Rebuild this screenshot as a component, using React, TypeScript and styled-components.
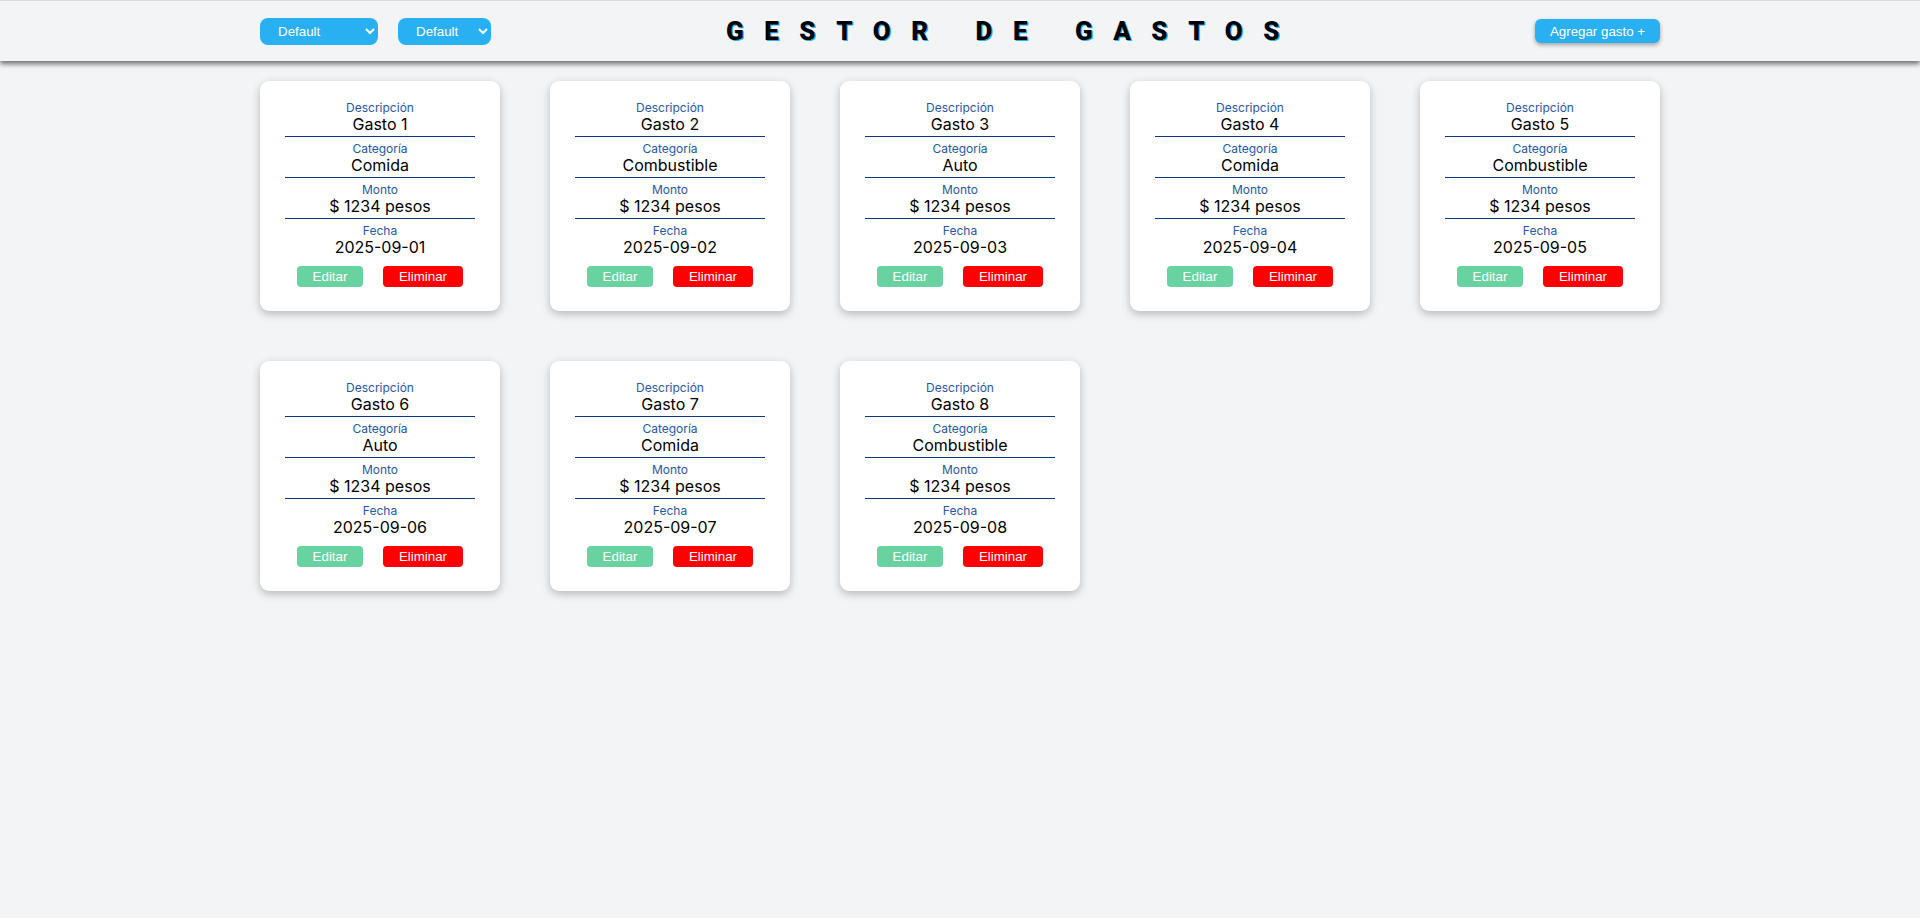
import React, { FC } from "react";
import styled, { createGlobalStyle } from "styled-components";

const GlobalStyle = createGlobalStyle`
  body {
    margin: 0;
    background: #f3f4f6;
    font-family: "Inter", "Liberation Sans", sans-serif;
  }
`;

const Header = styled.header`
  display: flex;
  justify-content: space-between;
  align-items: center;
  height: 60px;
  padding: 0 260px;
  background: #f3f4f6;
  border-top: 1px solid #dcdcdc;
  box-shadow: 0 3px 5px rgba(0, 0, 0, 0.55);
`;

const Filters = styled.div`
  display: flex;
  gap: 20px;
`;

const Select = styled.select<{ w: number }>`
  width: ${(p) => p.w}px;
  height: 27px;
  padding: 0 6px 0 14px;
  border: none;
  border-radius: 8px;
  background: #29b0f2;
  color: #fff;
  font: 13.33px "Liberation Sans", Arial, sans-serif;
  outline: none;
`;

const Title = styled.h1`
  margin: 0;
  font-family: Roboto, "Liberation Sans", sans-serif;
  font-weight: 900;
  font-size: 26px;
  letter-spacing: 20.5px;
  color: #000;
  text-shadow: 1px 1px 0 #29b0f2;
`;

const AddButton = styled.button`
  width: 125px;
  height: 24px;
  border: none;
  border-radius: 6px;
  background: #29b0f2;
  color: #fff;
  font: 13.33px "Liberation Sans", Arial, sans-serif;
  box-shadow: 0 2px 4px rgba(0, 0, 0, 0.35);
  cursor: pointer;
`;

const Grid = styled.main`
  display: grid;
  grid-template-columns: repeat(5, 240px);
  gap: 50px;
  padding: 20px 260px;
`;

const Card = styled.div`
  display: flex;
  flex-direction: column;
  height: 230px;
  box-sizing: border-box;
  padding: 20px 25px 0;
  background: #fff;
  border-radius: 9px;
  box-shadow: 0 3px 8px rgba(0, 0, 0, 0.25);
  text-align: center;
`;

const Field = styled.div<{ last?: boolean }>`
  padding-bottom: 2px;
  margin-bottom: ${(p) => (p.last ? 0 : 5)}px;
  border-bottom: ${(p) => (p.last ? "none" : "1px solid #0a3886")};
`;

const Label = styled.div`
  font-size: 12px;
  line-height: 13px;
  color: #2858a4;
`;

const Value = styled.div`
  font-size: 16px;
  line-height: 20px;
  color: #000;
`;

const Actions = styled.div`
  display: flex;
  justify-content: center;
  gap: 20px;
  margin-top: 7px;
`;

const ActionButton = styled.button<{ bg: string; w: number }>`
  width: ${(p) => p.w}px;
  height: 21px;
  padding: 0;
  border: none;
  border-radius: 4px;
  background: ${(p) => p.bg};
  color: #fff;
  font: 13.33px "Liberation Sans", Arial, sans-serif;
  cursor: pointer;
`;

interface Gasto {
  descripcion: string;
  categoria: string;
  monto: number;
  fecha: string;
}

const gastos: Gasto[] = [
  { descripcion: "Gasto 1", categoria: "Comida", monto: 1234, fecha: "2025-09-01" },
  { descripcion: "Gasto 2", categoria: "Combustible", monto: 1234, fecha: "2025-09-02" },
  { descripcion: "Gasto 3", categoria: "Auto", monto: 1234, fecha: "2025-09-03" },
  { descripcion: "Gasto 4", categoria: "Comida", monto: 1234, fecha: "2025-09-04" },
  { descripcion: "Gasto 5", categoria: "Combustible", monto: 1234, fecha: "2025-09-05" },
  { descripcion: "Gasto 6", categoria: "Auto", monto: 1234, fecha: "2025-09-06" },
  { descripcion: "Gasto 7", categoria: "Comida", monto: 1234, fecha: "2025-09-07" },
  { descripcion: "Gasto 8", categoria: "Combustible", monto: 1234, fecha: "2025-09-08" },
];

const GastoCard: FC<{ gasto: Gasto }> = ({ gasto }) => (
  <Card>
    <Field>
      <Label>Descripción</Label>
      <Value>{gasto.descripcion}</Value>
    </Field>
    <Field>
      <Label>Categoría</Label>
      <Value>{gasto.categoria}</Value>
    </Field>
    <Field>
      <Label>Monto</Label>
      <Value>$ {gasto.monto} pesos</Value>
    </Field>
    <Field last>
      <Label>Fecha</Label>
      <Value>{gasto.fecha}</Value>
    </Field>
    <Actions>
      <ActionButton bg="#68d3a1" w={66}>
        Editar
      </ActionButton>
      <ActionButton bg="#ff0000" w={80}>
        Eliminar
      </ActionButton>
    </Actions>
  </Card>
);

const App: FC = () => (
  <>
    <GlobalStyle />
    <Header>
      <Filters>
        <Select w={118} defaultValue="default">
          <option value="default">Default</option>
          <option value="comida">Comida</option>
          <option value="combustible">Combustible</option>
          <option value="auto">Auto</option>
        </Select>
        <Select w={93} defaultValue="default">
          <option value="default">Default</option>
          <option value="asc">Ascendente</option>
          <option value="desc">Descendente</option>
        </Select>
      </Filters>
      <Title>GESTOR DE GASTOS</Title>
      <AddButton>Agregar gasto +</AddButton>
    </Header>
    <Grid>
      {gastos.map((g) => (
        <GastoCard key={g.descripcion} gasto={g} />
      ))}
    </Grid>
  </>
);

export default App;
